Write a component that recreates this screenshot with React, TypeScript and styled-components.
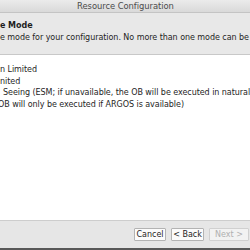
import styled, { createGlobalStyle } from 'styled-components';

const GlobalStyle = createGlobalStyle`
  html, body {
    margin: 0;
    padding: 0;
    background: #4a4a4a;
    overflow: hidden;
  }
`;

const Window = styled.div`
  width: 250px;
  height: 250px;
  display: flex;
  flex-direction: column;
  font-family: 'DejaVu Sans', 'Liberation Sans', sans-serif;
  font-size: 8px;
  letter-spacing: -0.05px;
  color: #1e1e1e;
  overflow: hidden;
`;

const TitleBar = styled.div`
  height: 12px;
  display: flex;
  align-items: center;
  justify-content: center;
  padding-left: 1px;
  background: linear-gradient(#ebebeb, #d9d9d9);
  border-bottom: 1px solid #c4c4c4;
  color: #4b4b4b;
  font-size: 8.4px;
  white-space: nowrap;
`;

const Header = styled.div`
  height: 42px;
  box-sizing: border-box;
  padding-top: 7px;
  background: #e8e8e8;
  border-bottom: 1px solid #c8c8c8;
  white-space: nowrap;
  overflow: hidden;
`;

const HeaderLine = styled.div<{ $bold?: boolean }>`
  height: 12px;
  line-height: 12px;
  font-weight: ${({ $bold }) => ($bold ? 700 : 400)};
`;

const OptionList = styled.div`
  flex: 1;
  background: #ffffff;
  padding-top: 9px;
  white-space: nowrap;
  overflow: hidden;
`;

const OptionLine = styled.div<{ $indent?: number }>`
  height: 11.7px;
  line-height: 11.7px;
  text-indent: ${({ $indent }) => $indent ?? 0}px;
`;

const ButtonBar = styled.div`
  height: 28px;
  box-sizing: border-box;
  display: flex;
  align-items: center;
  justify-content: flex-end;
  gap: 5px;
  padding-right: 1px;
  background: #e6e6e6;
  border-top: 1px solid #cdcdcd;
`;

const DialogButton = styled.button<{ $width: number }>`
  width: ${({ $width }) => $width}px;
  height: 13px;
  padding: 0;
  font-family: inherit;
  font-size: 8px;
  line-height: 11px;
  background: #fbfbfb;
  color: #1e1e1e;
  border: 1px solid #b3b3b3;
  border-radius: 1px;
  &:disabled {
    color: #b0b0b0;
    border-color: #d0d0d0;
    background: #f2f2f2;
  }
`;

const BottomEdge = styled.div`
  height: 2px;
  background: #585858;
`;

export default function App() {
  return (
    <Window>
      <GlobalStyle />
      <TitleBar>Resource Configuration</TitleBar>
      <Header>
        <HeaderLine $bold>e Mode</HeaderLine>
        <HeaderLine>e mode for your configuration. No more than one mode can be</HeaderLine>
      </Header>
      <OptionList>
        <OptionLine>n Limited</OptionLine>
        <OptionLine>nited</OptionLine>
        <OptionLine $indent={3}>Seeing (ESM; if unavailable, the OB will be executed in natural</OptionLine>
        <OptionLine $indent={-2}>OB will only be executed if ARGOS is available)</OptionLine>
      </OptionList>
      <ButtonBar>
        <DialogButton $width={32}>Cancel</DialogButton>
        <DialogButton $width={33}>&lt; Back</DialogButton>
        <DialogButton $width={40} disabled>
          Next &gt;
        </DialogButton>
      </ButtonBar>
      <BottomEdge />
    </Window>
  );
}
